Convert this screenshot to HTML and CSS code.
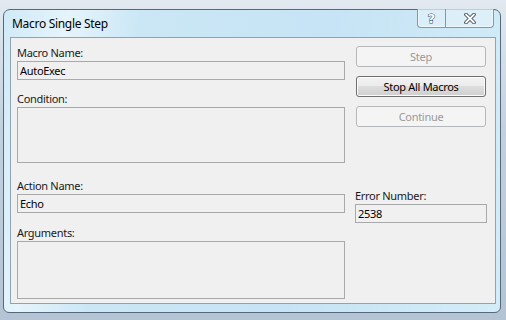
FILE: index.html
```html
<!DOCTYPE html>
<html lang="en">
<head>
    <meta charset="UTF-8">
    <meta name="viewport" content="width=device-width, initial-scale=1.0">
    <title>Macro Single Step</title>
    <link rel="stylesheet" href="styles.css">
</head>
<body>

<div class="window">
    <div class="titlebar">
        <span class="title">Macro Single Step</span>
        <div class="caption-buttons">
            <span class="cap-btn help">?</span>
            <span class="cap-btn close">
                <svg width="12" height="11" viewBox="0 0 12 11">
                    <path d="M2 1.5 L10 9.5 M10 1.5 L2 9.5" stroke="#3b4650" stroke-width="3.6" stroke-linecap="round"/>
                    <path d="M2 1.5 L10 9.5 M10 1.5 L2 9.5" stroke="#ffffff" stroke-width="1.8" stroke-linecap="round"/>
                </svg>
            </span>
        </div>
    </div>

    <div class="client">
        <div class="col-left">
            <label class="lbl">Macro Name:</label>
            <input class="field" type="text" value="AutoExec" readonly>

            <label class="lbl lbl-condition">Condition:</label>
            <textarea class="box box-condition" readonly></textarea>

            <label class="lbl lbl-action">Action Name:</label>
            <input class="field" type="text" value="Echo" readonly>

            <label class="lbl lbl-args">Arguments:</label>
            <textarea class="box box-args" readonly></textarea>
        </div>

        <div class="col-right">
            <button class="btn" disabled>Step</button>
            <button class="btn">Stop All Macros</button>
            <button class="btn" disabled>Continue</button>

            <label class="lbl lbl-error">Error Number:</label>
            <input class="field field-error" type="text" value="2538" readonly>
        </div>
    </div>
</div>

</body>
</html>
```

FILE: styles.css
```css
body {
    margin: 0;
    padding: 9px 0 0 3px;
    height: 320px;
    box-sizing: border-box;
    overflow: hidden;
    background: linear-gradient(#e2e9f0, #c3d0de 40%, #b4c4d5);
    font-family: 'Noto Sans', 'Open Sans', sans-serif;
    font-size: 11px;
    letter-spacing: -0.3px;
    color: #1a1a1a;
}

.window {
    width: 498px;
    height: 304px;
    box-sizing: border-box;
    border: 1px solid #55697c;
    border-radius: 7px 7px 6px 6px;
    background: linear-gradient(100deg, #cfeaf7 0%, #e6f4fb 12%, #cbe7f6 25%, #c6e4f5 60%, #d3ecf8 100%);
    padding-bottom: 8px;
    display: flex;
    flex-direction: column;
}

.titlebar {
    height: 27px;
    display: flex;
    align-items: flex-start;
    padding-left: 8px;
}

.title {
    font-size: 12px;
    line-height: 27px;
    color: #000;
}

.caption-buttons {
    margin-left: auto;
    margin-right: 6px;
    margin-top: -1px;
    height: 18px;
    display: flex;
    border: 1px solid #8098ad;
    border-top: none;
    border-radius: 0 0 4px 4px;
    background: rgba(255, 255, 255, 0.3);
    box-shadow: inset 0 0 0 1px rgba(255, 255, 255, 0.5);
}

.cap-btn {
    display: flex;
    align-items: center;
    justify-content: center;
    height: 18px;
}

.help {
    width: 27px;
    border-right: 1px solid #8098ad;
    font-family: 'DejaVu Sans', sans-serif;
    font-size: 13px;
    font-weight: bold;
    letter-spacing: 0;
    color: #ffffff;
    -webkit-text-stroke: 1px #3b4650;
    paint-order: stroke fill;
}

.close {
    width: 47px;
}

.client {
    flex: 1;
    margin: 0 4px 0 6px;
    border: 1px solid #8ea3b5;
    background: #f0f0f0;
    padding: 8px 0 0 6px;
    display: flex;
    gap: 10px;
}

.col-left {
    width: 328px;
    display: flex;
    flex-direction: column;
}

.col-right {
    width: 132px;
    display: flex;
    flex-direction: column;
}

.lbl {
    display: block;
    height: 13px;
    line-height: 13px;
    margin-bottom: 2px;
}

.lbl-condition {
    margin-top: 12px;
}

.lbl-action {
    margin-top: 16px;
}

.lbl-args {
    margin-top: 13px;
}

.lbl-error {
    margin-top: 53px;
}

.field, .box {
    font-family: inherit;
    font-size: 11px;
    letter-spacing: -0.3px;
    color: #000;
    background: #f0f0f0;
    border: 1px solid #a9a9a9;
    box-sizing: border-box;
    margin: 0;
    outline: none;
    resize: none;
}

.field {
    height: 19px;
    padding: 0 2px;
    width: 100%;
}

.box {
    width: 100%;
    padding: 0;
}

.box-condition {
    height: 56px;
}

.box-args {
    height: 58px;
}

.btn {
    width: 130px;
    height: 21px;
    margin: 0 0 9px 1px;
    padding: 0;
    font-family: inherit;
    font-size: 11px;
    letter-spacing: -0.3px;
    color: #000;
    border: 1px solid #707070;
    border-radius: 3px;
    background: linear-gradient(#f2f2f2 0%, #ebebeb 50%, #dddddd 50%, #cfcfcf 100%);
    box-shadow: inset 0 0 0 1px #fbfbfb;
}

.btn:disabled {
    color: #9a9a9a;
    border-color: #b5b8ba;
    background: #f4f4f4;
    box-shadow: none;
}
```
